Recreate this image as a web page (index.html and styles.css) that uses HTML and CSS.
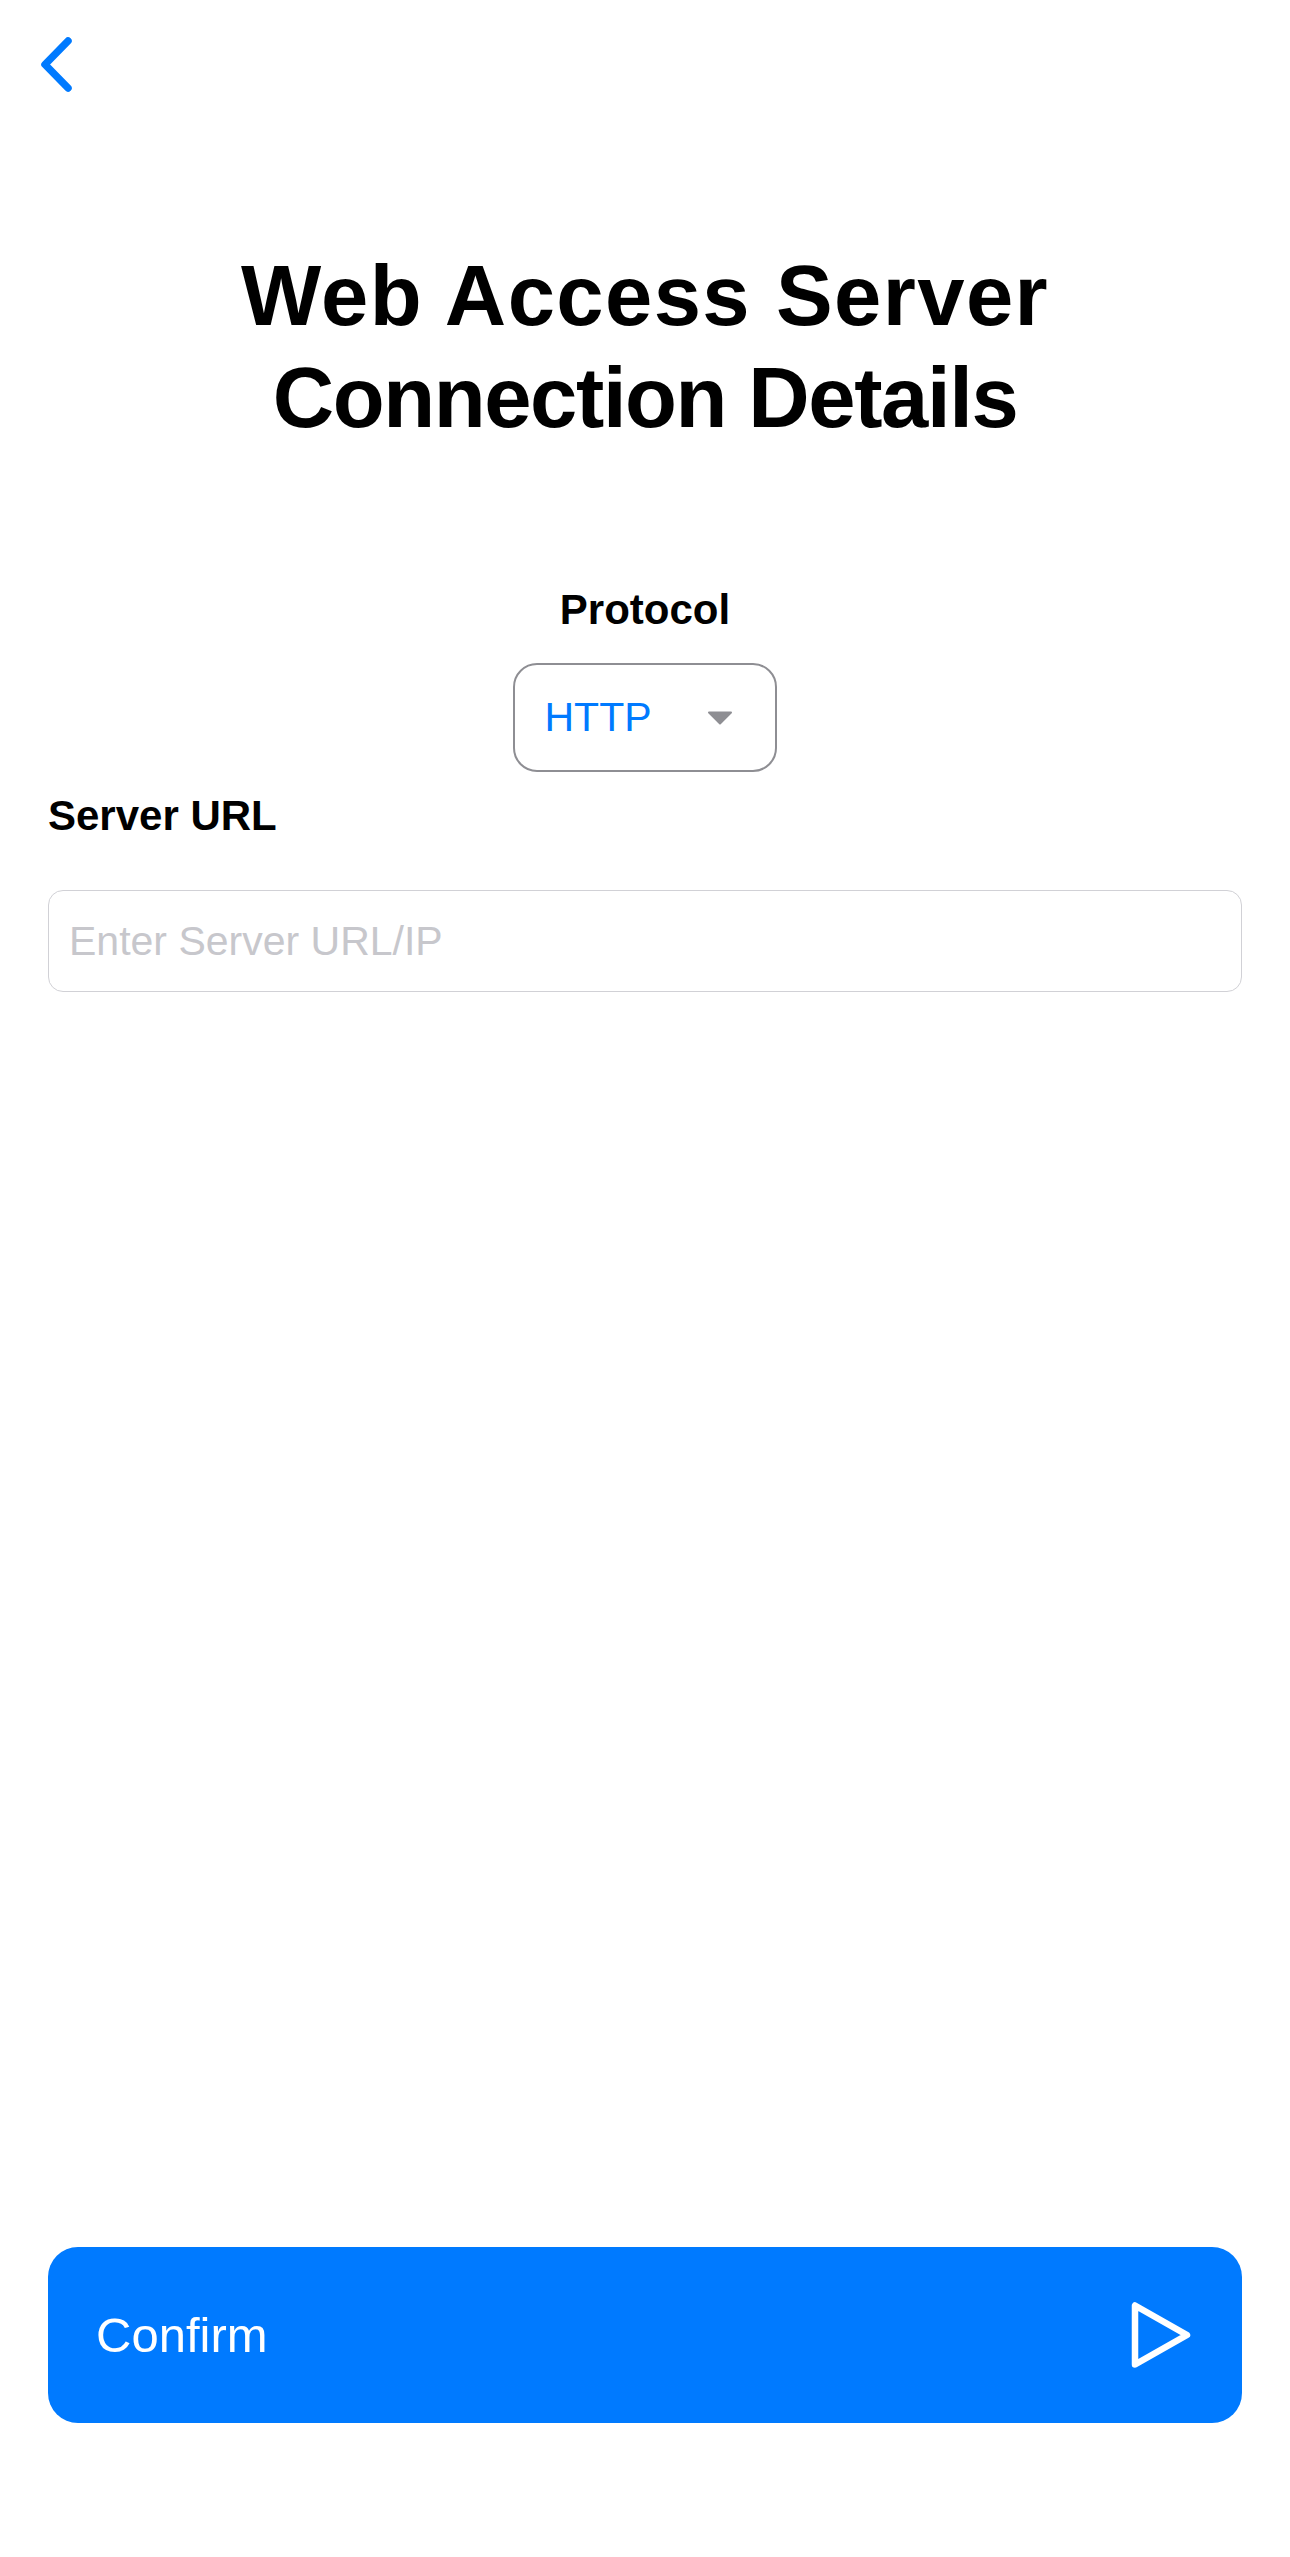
FILE: index.html
```html
<!DOCTYPE html>
<html lang="en">
<head>
<meta charset="utf-8">
<title>Web Access Server Connection Details</title>
<link rel="stylesheet" href="styles.css">
</head>
<body>
<div class="screen">
  <div class="topbar">
    <button class="back" aria-label="Back">
      <svg width="44" height="66" viewBox="0 0 44 66" aria-hidden="true">
        <path d="M32 11 L9 34.5 L32 58" fill="none" stroke="#007aff" stroke-width="7.5" stroke-linecap="round" stroke-linejoin="round"/>
      </svg>
    </button>
  </div>

  <h1 class="title"><span class="title-line title-line-1">Web Access Server</span><span class="title-line title-line-2">Connection Details</span></h1>

  <div class="protocol">
    <div class="label label-center">Protocol</div>
    <div class="select">
      <span class="select-value">HTTP</span>
      <svg class="caret" width="26" height="14" viewBox="0 0 26 14" aria-hidden="true">
        <path d="M2 1.5 H24 L13 12.5 Z" fill="#8e8e93" stroke="#8e8e93" stroke-width="2" stroke-linejoin="round"/>
      </svg>
    </div>
  </div>

  <div class="label label-left">Server URL</div>
  <div class="input">
    <span class="placeholder">Enter Server URL/IP</span>
  </div>

  <button class="confirm">
    <span class="confirm-text">Confirm</span>
    <svg width="60" height="68" viewBox="0 0 60 68" aria-hidden="true">
      <path d="M4 4.5 L4 63.5 L56 34 Z" fill="none" stroke="#ffffff" stroke-width="6.5" stroke-linejoin="round"/>
    </svg>
  </button>
</div>
</body>
</html>
```

FILE: styles.css
```css
html, body {
  margin: 0;
  padding: 0;
  background: #ffffff;
}

body {
  font-family: "Liberation Sans", Arial, sans-serif;
  color: #000000;
}

.screen {
  display: flex;
  flex-direction: column;
  height: 2557px;
  box-sizing: border-box;
  padding: 0 48px 134px 48px;
}

.topbar {
  display: flex;
  padding-top: 30px;
  margin-left: -12px;
  height: 66px;
}

.back {
  display: block;
  padding: 0;
  margin: 0;
  border: 0;
  background: none;
  width: 44px;
  height: 66px;
}

.back svg {
  display: block;
}

.title {
  margin: 148.6px 0 0 0;
  font-size: 85px;
  line-height: 102px;
  font-weight: 700;
  text-align: center;
  display: flex;
  flex-direction: column;
  align-items: center;
}

.title-line {
  display: block;
  white-space: nowrap;
}

.title-line-1 {
  letter-spacing: 1.4px;
}

.title-line-2 {
  letter-spacing: -1.4px;
}

.protocol {
  display: flex;
  flex-direction: column;
  align-items: center;
  margin-top: 136px;
}

.label {
  font-size: 42px;
  line-height: 50px;
  font-weight: 700;
}

.label-left {
  margin-top: 18.4px;
}

.select {
  margin-top: 28.6px;
  width: 264px;
  height: 109px;
  box-sizing: border-box;
  border: 2.5px solid #8e8e93;
  border-radius: 24px;
  display: flex;
  align-items: center;
  justify-content: space-between;
  padding: 0 42.5px 0 29.5px;
}

.select-value {
  font-size: 41px;
  color: #007aff;
}

.caret {
  display: block;
}

.input {
  margin-top: 49.6px;
  height: 102px;
  box-sizing: border-box;
  border: 1.5px solid #d1d1d6;
  border-radius: 15px;
  display: flex;
  align-items: center;
  padding-left: 20px;
}

.placeholder {
  font-size: 41px;
  color: #c7c7cc;
}

.confirm {
  margin-top: auto;
  height: 176px;
  width: 100%;
  border: 0;
  border-radius: 30px;
  background: #007aff;
  display: flex;
  align-items: center;
  justify-content: space-between;
  padding: 0 51px 0 48px;
  box-sizing: border-box;
  font-family: "Liberation Sans", Arial, sans-serif;
}

.confirm-text {
  font-size: 49px;
  color: #ffffff;
}

.confirm svg {
  display: block;
}
```
